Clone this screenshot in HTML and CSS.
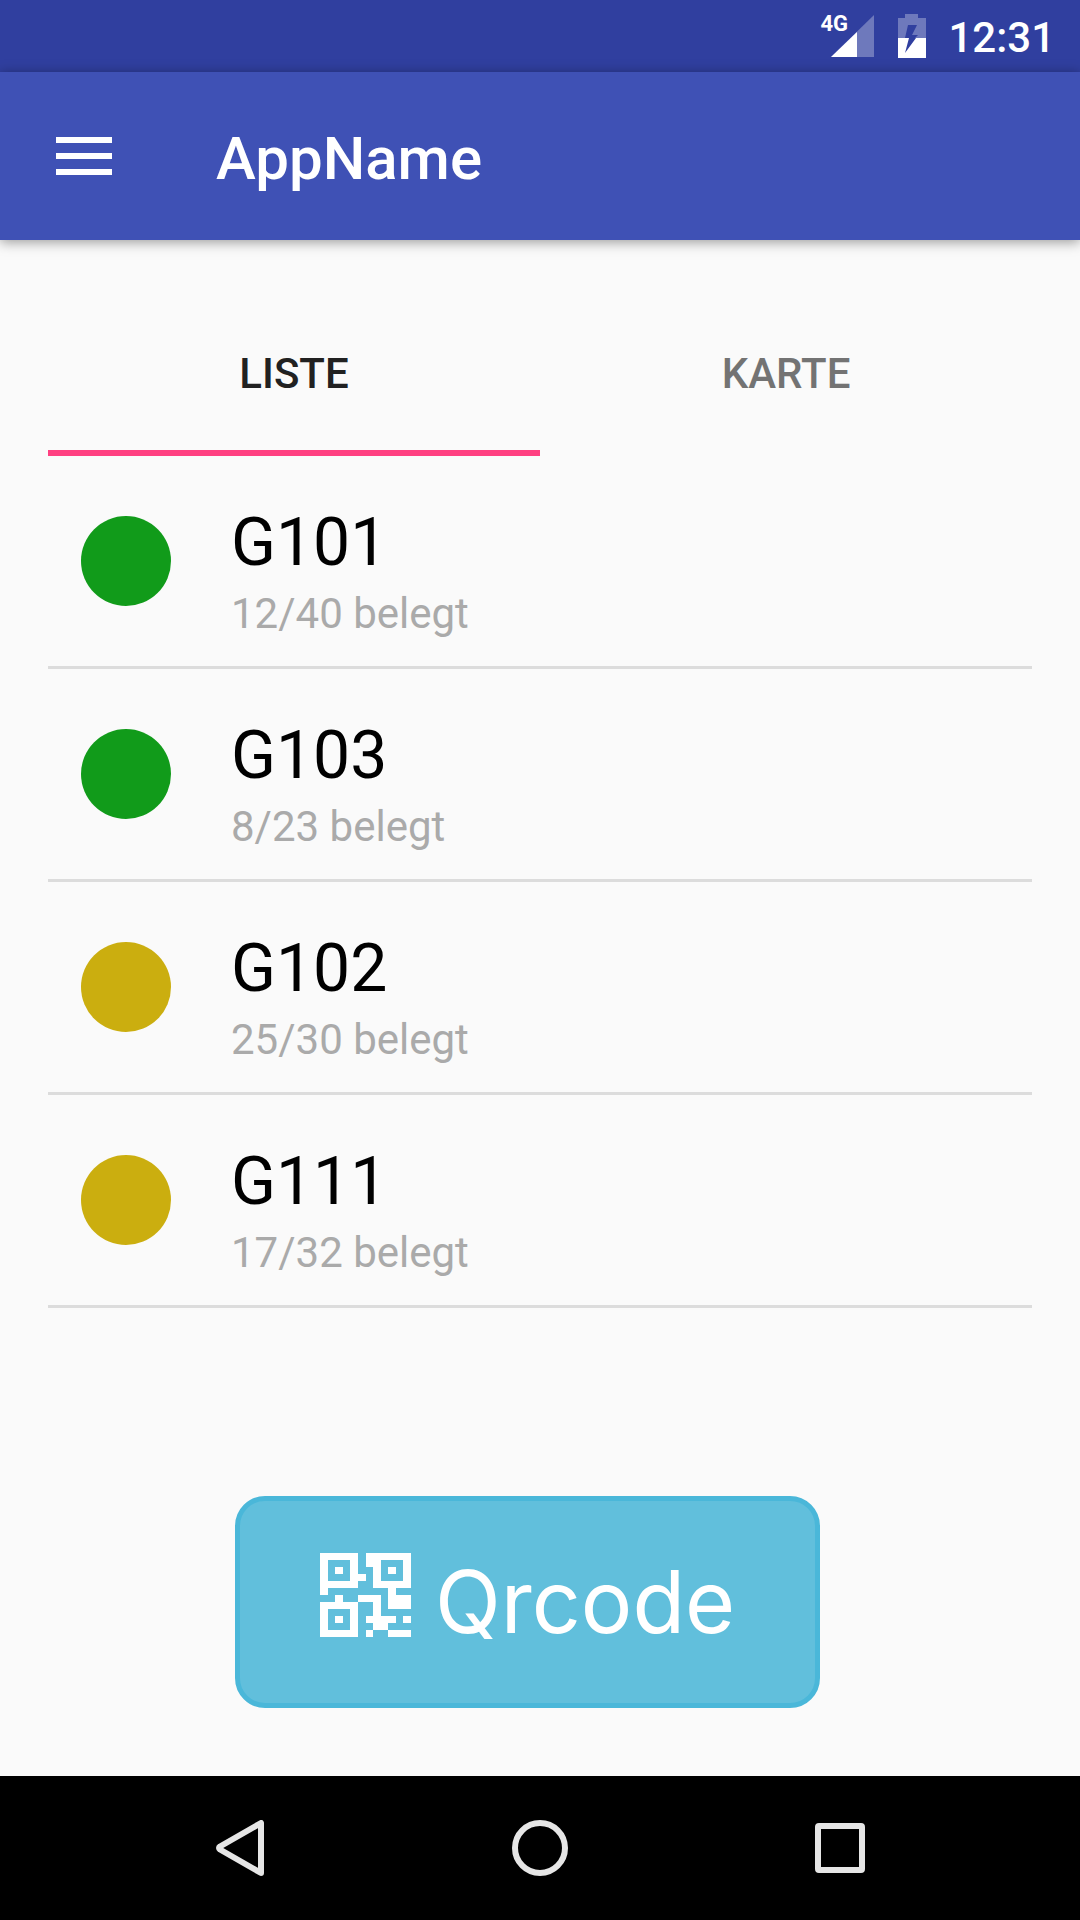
FILE: index.html
```html
<!DOCTYPE html>
<html lang="de">
<head>
<meta charset="utf-8">
<meta name="viewport" content="width=device-width, initial-scale=1">
<title>AppName</title>
<link rel="stylesheet" href="styles.css">
</head>
<body>
<div class="status-bar">
  <div class="signal">
    <svg class="signal-icon" viewBox="0 0 43 42" aria-hidden="true">
      <path d="M43 0V42H0Z" fill="#fff" fill-opacity=".3"/>
      <path d="M26 17V42H0Z" fill="#fff"/>
    </svg>
    <span class="signal-type">4G</span>
  </div>
  <svg class="battery-icon" viewBox="0 0 28 44" aria-hidden="true">
    <path fill-rule="evenodd" d="M7 0H20V4H28V24H17L20 21H14L19 11H10L7 24H0V4H7Z" fill="#fff" fill-opacity=".3"/>
    <path d="M0 24H11L7 39L18 24H28V44H0Z" fill="#fff"/>
  </svg>
  <time class="clock">12:31</time>
</div>
<header class="app-bar">
  <button class="menu-button" type="button" aria-label="Menü">
    <svg class="menu-icon" viewBox="0 0 56 38" aria-hidden="true"><path d="M0 0H56V6H0ZM0 16H56V22H0ZM0 32H56V38H0Z" fill="#fff"/></svg>
  </button>
  <h1 class="app-title">AppName</h1>
</header>
<main class="content">
  <div class="tabs" role="tablist">
    <button class="tab tab-active" type="button" role="tab" aria-selected="true">LISTE</button>
    <button class="tab" type="button" role="tab" aria-selected="false">KARTE</button>
  </div>
  <ul class="room-list">
    <li class="room">
      <span class="dot dot-free"></span>
      <div><div class="room-name">G101</div><div class="room-usage">12/40 belegt</div></div>
    </li>
    <li class="room">
      <span class="dot dot-free"></span>
      <div><div class="room-name">G103</div><div class="room-usage">8/23 belegt</div></div>
    </li>
    <li class="room">
      <span class="dot dot-busy"></span>
      <div><div class="room-name">G102</div><div class="room-usage">25/30 belegt</div></div>
    </li>
    <li class="room">
      <span class="dot dot-busy"></span>
      <div><div class="room-name">G111</div><div class="room-usage">17/32 belegt</div></div>
    </li>
  </ul>
  <div class="actions">
    <button class="qr-button" type="button">
      <svg class="qr-icon" viewBox="0 0 12 12" preserveAspectRatio="none" shape-rendering="crispEdges" aria-hidden="true">
        <path fill="#fff" fill-rule="evenodd" d="M0 0H5V3H6V4H5V5H1V6H0ZM1 1V4H4V1ZM2 2H3V3H2ZM6 0H12V5H10V6H12V8H9V5H7V2H6ZM8 1V4H11V1ZM9 2H10V3H9ZM0 7H2V6H3V7H5V12H0ZM1 8V11H4V8ZM2 9H3V10H2ZM5 6H8V9H10V10H9V11H7V10H6V9H7V7H5ZM11 9H12V10H11ZM6 11H7V12H6ZM9 11H12V12H9Z"/>
      </svg>
      <span>Qrcode</span>
    </button>
  </div>
</main>
<nav class="nav-bar">
  <button class="nav-button" type="button" aria-label="Zurück">
    <svg class="nav-icon" viewBox="0 0 56 56" aria-hidden="true"><path d="M49 3V53L8 29.500Q6 28 8 26.500Z"/></svg>
  </button>
  <button class="nav-button" type="button" aria-label="Startseite">
    <svg class="nav-icon" viewBox="0 0 56 56" aria-hidden="true"><circle cx="28" cy="28" r="25"/></svg>
  </button>
  <button class="nav-button" type="button" aria-label="Übersicht">
    <svg class="nav-icon" viewBox="0 0 56 56" aria-hidden="true"><rect x="6" y="6" width="44" height="44" rx="1"/></svg>
  </button>
</nav>
</body>
</html>
```
FILE: styles.css
```css
* {
  box-sizing: border-box;
}

body {
  margin: 0;
  min-height: 100vh;
  display: flex;
  flex-direction: column;
  background: #fafafa;
  color: #000;
  font-family: Roboto, sans-serif;
}

button {
  margin: 0;
  padding: 0;
  border: 0;
  background: none;
  color: inherit;
  font: inherit;
}

svg {
  display: block;
}

/* System status bar */
.status-bar {
  height: 72px;
  padding: 0 25px 0 0;
  display: flex;
  justify-content: flex-end;
  align-items: center;
  background: #303f9f;
  color: #fff;
}

.signal {
  position: relative;
  margin-right: 24px;
}

.signal-icon {
  width: 43px;
  height: 42px;
}

.signal-type {
  position: absolute;
  top: -4px;
  left: -11px;
  font-size: 22px;
  font-weight: 700;
  line-height: 26px;
}

.battery-icon {
  width: 28px;
  height: 44px;
  margin-right: 22px;
}

.clock {
  font-size: 42px;
  font-weight: 500;
  line-height: 48px;
  padding-top: 4px;
}

/* Toolbar */
.app-bar {
  position: relative;
  height: 168px;
  padding: 0 56px;
  display: flex;
  align-items: center;
  gap: 104px;
  background: #3f51b5;
  color: #fff;
  box-shadow: 0 2px 12px rgba(0, 0, 0, 0.4);
}

.menu-icon {
  width: 56px;
  height: 38px;
}

.app-title {
  margin: 0;
  padding-top: 6px;
  font-size: 60px;
  font-weight: 500;
  line-height: 72px;
}

/* Page content */
.content {
  flex: 1;
  display: flex;
  flex-direction: column;
  padding: 48px 48px 68px;
}

.tabs {
  display: grid;
  grid-template-columns: 1fr 1fr;
}

.tab {
  height: 168px;
  padding-top: 8px;
  border: solid transparent;
  border-width: 0 0 6px;
  color: #737373;
  font-size: 42px;
  font-weight: 500;
}

.tab-active {
  border-color: #ff4081;
  color: #212121;
}

.room-list {
  margin: 0;
  padding: 0;
  list-style: none;
}

.room {
  display: flex;
  align-items: flex-start;
  gap: 60px;
  padding: 48px 33px 20px;
  border-bottom: 3px solid #dcdcdc;
}

.dot {
  width: 90px;
  height: 90px;
  margin-top: 12px;
  border-radius: 50%;
}

.dot-free {
  background: #119b1a;
}

.dot-busy {
  background: #cbae0f;
}

.room-name {
  font-size: 66px;
  line-height: 78px;
}

.room-usage {
  color: #aaa;
  font-size: 42px;
  line-height: 64px;
}

.actions {
  display: flex;
  justify-content: center;
  margin-top: auto;
  padding: 48px 25px 0 0;
}

.qr-button {
  display: flex;
  align-items: center;
  gap: 24px;
  width: 585px;
  height: 212px;
  padding: 0 72px 14px 80px;
  border: 5px solid #4ab7d9;
  border-radius: 30px;
  background: #61bfdc;
  color: #fff;
  font: 400 86px/100px Inter, sans-serif;
}

.qr-button span {
  padding-top: 14px;
}

.qr-icon {
  width: 91px;
  height: 84px;
}

/* System navigation bar */
.nav-bar {
  display: grid;
  grid-template-columns: repeat(3, 1fr);
  height: 144px;
  padding: 0 90px;
  background: #000;
}

.nav-button {
  display: grid;
  place-items: center;
}

.nav-icon {
  width: 56px;
  height: 56px;
  fill: none;
  stroke: #e6e6e6;
  stroke-width: 6;
  stroke-linejoin: round;
}
```
